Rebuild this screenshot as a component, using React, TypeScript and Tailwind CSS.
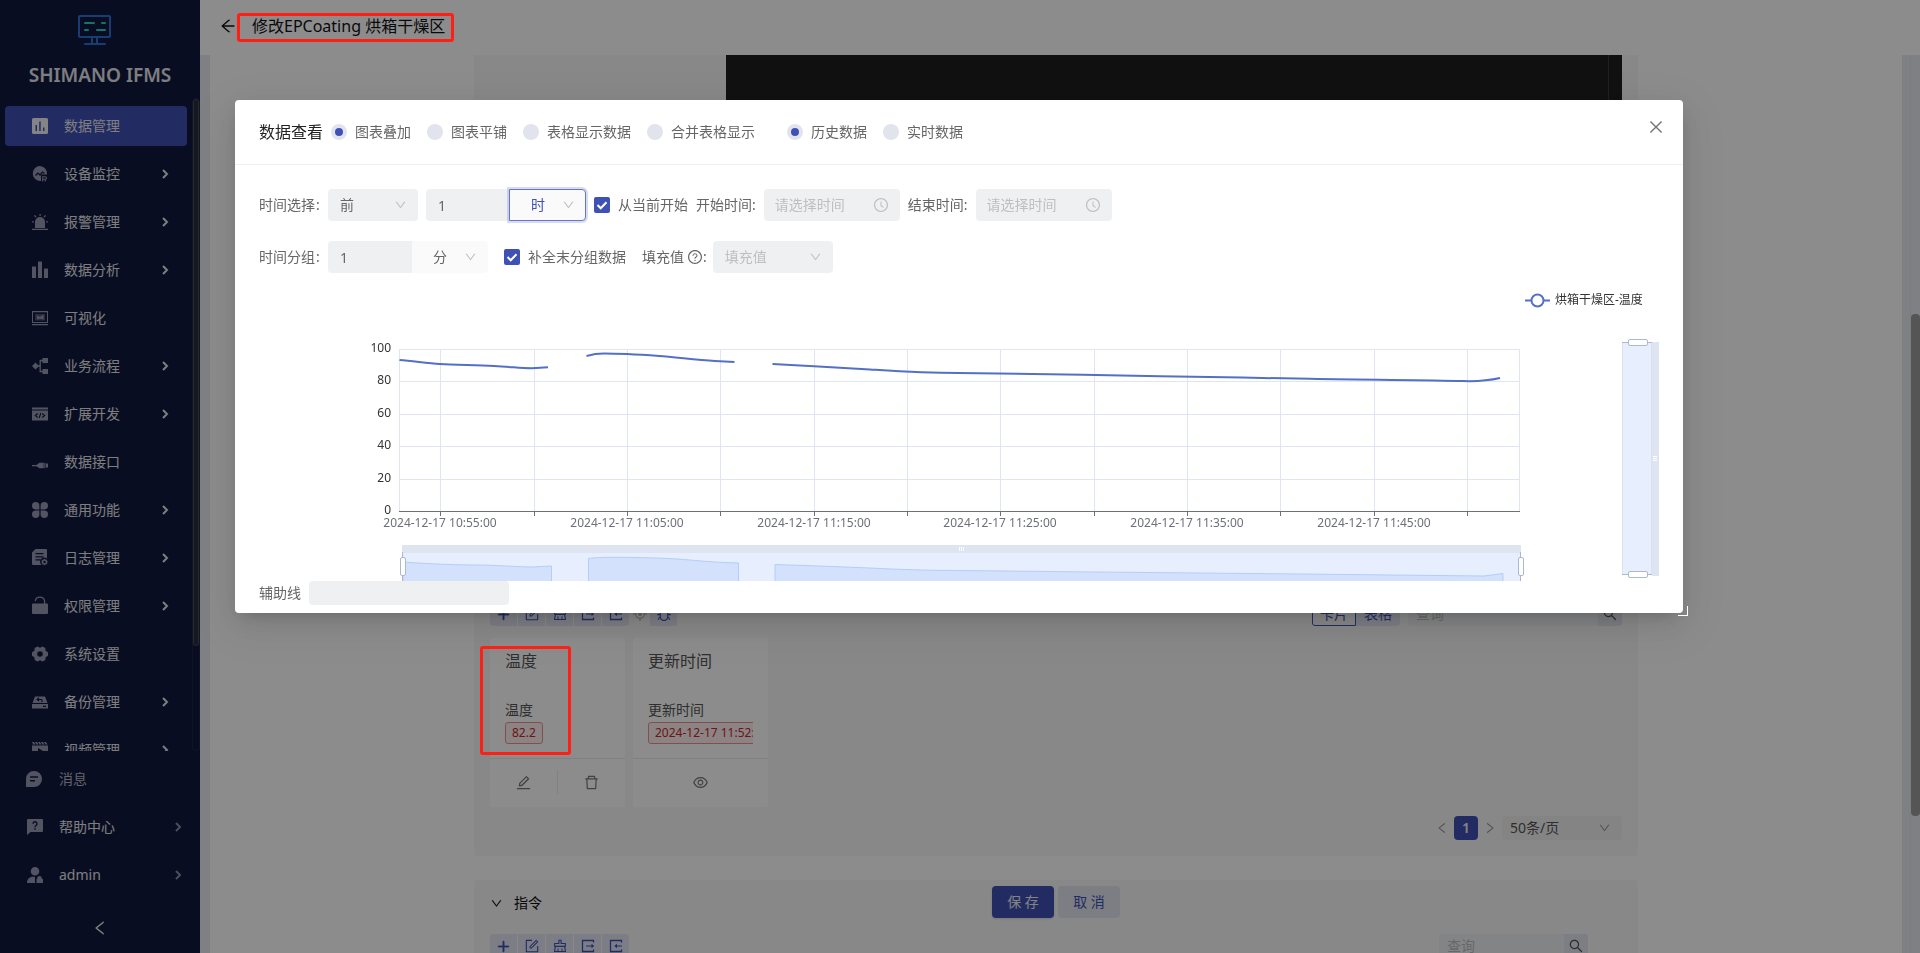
import { useState, type ReactNode } from 'react';
import {
  AiOutlineAim,
  AiOutlineArrowLeft,
  AiOutlineBug,
  AiOutlineClear,
  AiOutlineClockCircle,
  AiOutlineClose,
  AiOutlineDelete,
  AiOutlineDown,
  AiOutlineEdit,
  AiOutlineEye,
  AiOutlineForm,
  AiOutlineLeft,
  AiOutlinePlus,
  AiOutlineQuestionCircle,
  AiOutlineRight,
  AiOutlineSearch,
} from 'react-icons/ai';

type MenuItem = {
  key: string;
  label: string;
  icon: ReactNode;
  hasChildren?: boolean;
};

const menuItems: MenuItem[] = [
  {
    key: 'data',
    label: '数据管理',
    icon: (
      <path
        fillRule="evenodd"
        d="M1.5 0h13A1.5 1.5 0 0 1 16 1.5v13a1.5 1.5 0 0 1-1.5 1.5h-13A1.5 1.5 0 0 1 0 14.5v-13A1.5 1.5 0 0 1 1.5 0zM3.500 7v6h1.500V7zM7.200 3.500V13h1.500V3.500zM11 9.500V13h1.500V9.500z"
      />
    ),
  },
  {
    key: 'monitor',
    label: '设备监控',
    hasChildren: true,
    icon: (
      <>
        <path d="M7.500 0A7.500 7.500 0 0 1 15 8.500H9V15a7.500 7.500 0 1 1-1.500-15z" />
        <path
          d="M3.500 9.500 6 7l2 2 2.500-3 2 1.500"
          fill="none"
          stroke="#12193e"
          strokeWidth="1.200"
        />
        <path
          d="M10.700 15.500v-4.800h2.500a1.300 1.300 0 0 1 0 2.600h-2.500M13.200 13.500v2"
          fill="none"
          stroke="currentColor"
          strokeWidth="1.100"
        />
      </>
    ),
  },
  {
    key: 'alarm',
    label: '报警管理',
    hasChildren: true,
    icon: (
      <path d="M3 14V8a5 5 0 0 1 10 0v6zM0 14.700h16v1.200H0zM7.500 0h1.200v2H7.500zM2 1.800l1-.8 1.500 1.700-1 .8zM14 1.800l-1-.8-1.500 1.700 1 .8zM0 7.300h1.800v1.200H0zM14.200 7.300H16v1.200h-1.800z" />
    ),
  },
  {
    key: 'analysis',
    label: '数据分析',
    hasChildren: true,
    icon: (
      <path d="M.7 4.500h2.600a.7.700 0 0 1 .7.700V16H0V5.200a.7.700 0 0 1 .7-.7zM6.700-.5h2.600a.7.700 0 0 1 .7.700V16H6V.2a.7.700 0 0 1 .7-.7zM12.700 6.500h2.600a.7.700 0 0 1 .7.700V16h-4V7.200a.7.700 0 0 1 .7-.7z" />
    ),
  },
  {
    key: 'visual',
    label: '可视化',
    icon: (
      <>
        <path fillRule="evenodd" d="M0 1h16v12H0zM1 2.200v9.800h14V2.200zM0 14h16v1.200H0z" />
        <path d="M3 4h10v6.500H3z" opacity=".45" />
        <path d="M5 5.500 8 7l3.500-2.500v5L8 8.500 5 9.500z" />
      </>
    ),
  },
  {
    key: 'flow',
    label: '业务流程',
    hasChildren: true,
    icon: (
      <>
        <path d="M3.500 4.500 7 8l-3.500 3.500L0 8zM10.500 0H16v5h-5.500zM10.500 11H16v5h-5.500z" />
        <path
          d="M11 2.500H8.200v11H11M6 8h2"
          fill="none"
          stroke="currentColor"
          strokeWidth="1.300"
        />
      </>
    ),
  },
  {
    key: 'dev',
    label: '扩展开发',
    hasChildren: true,
    icon: (
      <>
        <path d="M0 1.500h16v2H0zM0 4.500h16v10H0z" />
        <path
          d="M5.800 7.500 3.300 9.500l2.500 2M10.200 7.500l2.500 2-2.500 2M8.800 7l-1.600 5"
          fill="none"
          stroke="#12193e"
          strokeWidth="1.100"
        />
      </>
    ),
  },
  {
    key: 'api',
    label: '数据接口',
    icon: (
      <path d="M0 11h4.500L7.500 8.700h4.200v5.600H7.500l-3-2.100H0zM12.300 8.700h1v5.600h-1zM13.800 9.500H16v4h-2.200z" />
    ),
  },
  {
    key: 'common',
    label: '通用功能',
    hasChildren: true,
    icon: (
      <path d="M3.700 0a3.700 3.700 0 0 1 3.700 3.700v3.700H3.700a3.700 3.700 0 0 1 0-7.400zM12.300 0a3.700 3.700 0 0 1 0 7.400H8.600V3.700A3.700 3.700 0 0 1 12.300 0zM3.700 8.600h3.700v3.700a3.700 3.700 0 1 1-3.700-3.700zM8.600 8.600h3.700a3.700 3.700 0 1 1-3.700 3.700z" />
    ),
  },
  {
    key: 'log',
    label: '日志管理',
    hasChildren: true,
    icon: (
      <>
        <path
          fillRule="evenodd"
          d="M3.500-1H14a1 1 0 0 1 1 1v8.500a4 4 0 0 0-5.500 6.500H1a1 1 0 0 1-1-1V2.500zM3.500 3v1.200h8V3zM3.500 6.200v1.200h8V6.200zM3.500 9.300v1.200h5V9.300z"
        />
        <circle cx="12.500" cy="12" r="2" fill="none" stroke="currentColor" strokeWidth="1.500" />
        <path
          d="M12.500 8.800v1M12.500 14.200v1M9.400 12h1M14.600 12h1M10.300 9.800l.7.700M14 13.500l.7.700M14.700 9.800l-.7.700M11 13.500l-.7.700"
          stroke="currentColor"
        />
      </>
    ),
  },
  {
    key: 'auth',
    label: '权限管理',
    hasChildren: true,
    icon: (
      <>
        <path d="M1 5.500h14a1 1 0 0 1 1 1V15a1 1 0 0 1-1 1H1a1 1 0 0 1-1-1V6.500a1 1 0 0 1 1-1z" />
        <path
          d="M3.200 3a4.800 4.800 0 0 1 9.400 0v3"
          fill="none"
          stroke="currentColor"
          strokeWidth="1.300"
        />
      </>
    ),
  },
  {
    key: 'system',
    label: '系统设置',
    icon: (
      <path
        fillRule="evenodd"
        d="M5.500.5 8 1.700 10.500.5 13.300 2l.3 2.800L16 6.300v3.400l-2.400 1.500-.3 2.800-2.800 1.500L8 14.300l-2.500 1.200L2.700 14l-.3-2.800L0 9.700V6.300l2.400-1.500L2.700 2zM8 5.200a2.800 2.800 0 1 0 0 5.600 2.800 2.800 0 0 0 0-5.600z"
      />
    ),
  },
  {
    key: 'backup',
    label: '备份管理',
    hasChildren: true,
    icon: (
      <>
        <path
          fillRule="evenodd"
          d="M3 2.500h10L15.500 9H.5zM0 10h16v4.500H0zM11 11.700v1.200h3v-1.200z"
        />
        <path
          d="M5 5.500h4.500a1.500 1.500 0 0 1 0 2.500M7 3.700 5 5.500l2 1.700"
          fill="none"
          stroke="#12193e"
          strokeWidth="1.100"
        />
      </>
    ),
  },
  {
    key: 'video',
    label: '视频管理',
    hasChildren: true,
    icon: (
      <path
        fillRule="evenodd"
        d="M0 0h2l1.500 2.500h-2zM3 0h2l1.500 2.500h-2zM6 0h2l1.500 2.500h-2zM9 0h2l1.500 2.500h-2zM12 0h2l1.500 2.500h-2zM0 1.500V2.500h.7zM0 3.500h16V15H0zM6 6v6l5-3z"
      />
    ),
  },
];

const bottomItems: MenuItem[] = [
  {
    key: 'message',
    label: '消息',
    icon: (
      <path
        fillRule="evenodd"
        d="M8 0a8 8 0 1 1 0 16H0V8a8 8 0 0 1 8-8zM4 5.300v1.500h8V5.300zM4 9v1.500h5V9z"
      />
    ),
  },
  {
    key: 'help',
    label: '帮助中心',
    hasChildren: true,
    icon: (
      <>
        <path d="M2 0h14a1 1 0 0 1 1 1v11a1 1 0 0 1-1 1H4.500L1 16V1a1 1 0 0 1 1-1z" />
        <path
          d="M7 4.800a2 2 0 1 1 3 1.700c-.7.400-1 .7-1 1.700M9 9.300v1.400"
          fill="none"
          stroke="#12193e"
          strokeWidth="1.400"
        />
      </>
    ),
  },
  {
    key: 'user',
    label: 'admin',
    hasChildren: true,
    icon: (
      <path d="M9 0a4.300 4.300 0 1 1 0 8.600A4.300 4.300 0 0 1 9 0zM1 16c0-4 2.500-6.300 6-6.300h2V16zM10.500 12h.7v-.7a2.300 2.300 0 0 1 4.600 0v.7H17v4h-6.500z" />
    ),
  },
];

const MenuIcon = ({ children }: { children: ReactNode }) => (
  <svg
    width="16"
    height="16"
    viewBox="0 0 16 16"
    fill="currentColor"
    className="shrink-0 overflow-visible"
  >
    {children}
  </svg>
);

const Arrow = () => (
  <svg width="7" height="10" viewBox="0 0 7 10" fill="none" stroke="currentColor" strokeWidth="2">
    <path d="M1 1l4 4-4 4" />
  </svg>
);

const Logo = () => (
  <svg width="33" height="30" viewBox="0 0 33 30" fill="none">
    <rect x="1" y="1" width="31" height="21" rx="1" stroke="#2f6fd0" strokeWidth="2" />
    <path d="M14 22v6M19 22v6M7 29h20" stroke="#2f6fd0" strokeWidth="2" strokeLinecap="round" />
    <path
      d="M7 8h9M24 8h3M7 15h3M19 15h8"
      stroke="#22d3cc"
      strokeWidth="2"
      strokeLinecap="round"
    />
  </svg>
);

const SideBar = () => {
  const [activeKey, setActiveKey] = useState('data');

  return (
    <aside className="flex h-full w-[200px] shrink-0 flex-col bg-[#12193e] text-[#e4e5ea]">
      {/* Logo */}
      <div className="flex h-[98px] shrink-0 flex-col items-center pt-[15px]">
        <div className="pr-[11px]">
          <Logo />
        </div>
        <p className="mt-3 text-[19px] leading-9 font-semibold whitespace-nowrap">SHIMANO IFMS</p>
      </div>

      {/* Menu Items */}
      <div className="flex h-[653px] shrink-0">
        <nav className="flex-1 overflow-hidden px-[5px] pt-2">
          <ul className="space-y-2">
            {menuItems.map((item) => (
              <li key={item.key}>
                <a
                  href={`#${item.key}`}
                  onClick={() => setActiveKey(item.key)}
                  className={`flex h-10 items-center rounded pr-[18px] pl-[27px] ${
                    activeKey === item.key ? 'bg-[#3f51b5]' : ''
                  }`}
                >
                  <span className={activeKey === item.key ? 'text-[#f0f0f4]' : 'text-[#9799b3]'}>
                    <MenuIcon>{item.icon}</MenuIcon>
                  </span>
                  <span className="ml-4 flex-1">{item.label}</span>
                  {item.hasChildren && <Arrow />}
                </a>
              </li>
            ))}
          </ul>
        </nav>
        <div className="w-2 rounded border border-[#20253f]">
          <div className="h-[547px] rounded border border-[#454a58] bg-[#282c3c]" />
        </div>
      </div>

      {/* User area */}
      <ul className="space-y-2 pt-2 pr-[18px] pl-[26px]">
        {bottomItems.map((item) => (
          <li key={item.key}>
            <a href={`#${item.key}`} className="flex h-10 items-center">
              <span className="text-[#9799b3]">
                <MenuIcon>{item.icon}</MenuIcon>
              </span>
              <span
                className={`ml-[17px] flex-1 ${item.key === 'message' ? 'text-[#b4b5c0]' : ''}`}
              >
                {item.label}
              </span>
              {item.hasChildren && (
                <span className="text-[#8c8ea5]">
                  <Arrow />
                </span>
              )}
            </a>
          </li>
        ))}
      </ul>
      <button className="mt-6 flex justify-center" aria-label="收起菜单">
        <AiOutlineLeft size={18} />
      </button>
    </aside>
  );
};

const ExportIcon = () => (
  <svg width="14" height="14" viewBox="0 0 14 14" fill="none" stroke="currentColor">
    <path d="M12.500 3.500V1.500h-11v11h11v-2" strokeWidth="1.300" />
    <path d="M5 7h7" />
    <path d="M10.500 4.800 13.200 7l-2.700 2.200z" fill="currentColor" stroke="none" />
  </svg>
);

const ImportIcon = () => (
  <svg width="14" height="14" viewBox="0 0 14 14" fill="none" stroke="currentColor">
    <path d="M12.500 3.500V1.500h-11v11h11v-2" strokeWidth="1.300" />
    <path d="M6 7h7" />
    <path d="M8 4.800 5.300 7 8 9.200z" fill="currentColor" stroke="none" />
  </svg>
);

const ToolButton = ({ label, children }: { label: string; children: ReactNode }) => (
  <button
    aria-label={label}
    className="flex h-6 w-[27px] items-center justify-center bg-[#e3e6f3] text-[#3f51b5]"
  >
    {children}
  </button>
);

const ToolGroup = () => (
  <div className="flex gap-px overflow-hidden rounded-[3px]">
    <ToolButton label="新增">
      <AiOutlinePlus size={15} strokeWidth={50} />
    </ToolButton>
    <ToolButton label="编辑">
      <AiOutlineForm size={16} />
    </ToolButton>
    <ToolButton label="清空">
      <AiOutlineClear size={16} />
    </ToolButton>
    <ToolButton label="导出">
      <ExportIcon />
    </ToolButton>
    <ToolButton label="导入">
      <ImportIcon />
    </ToolButton>
  </div>
);

const SearchBox = ({ className }: { className: string }) => (
  <div className={`flex h-6 overflow-hidden rounded-[3px] bg-[#eff0f2] ${className}`}>
    <input
      aria-label="查询"
      placeholder="查询"
      className="min-w-0 flex-1 bg-transparent px-2 outline-none placeholder:text-[#bdbdbd]"
    />
    <button
      aria-label="搜索"
      className="flex w-6 items-center justify-center bg-[#e3e5ee] text-[#555]"
    >
      <AiOutlineSearch size={16} />
    </button>
  </div>
);

type PointCardProps = {
  name: string;
  value: string;
  children: ReactNode;
};

const PointCard = ({ name, value, children }: PointCardProps) => (
  <div className="h-[169px] w-[135px] rounded-[3px] bg-white text-[#555]">
    <div className="h-[121px] overflow-hidden border-b border-[#ececec] px-[15px] pt-[11px]">
      <h3 className="text-base leading-6">{name}</h3>
      <p className="mt-[26px] leading-[22px]">{name}</p>
      <div className="overflow-hidden">
        <span className="mt-px inline-block h-[22px] rounded-[3px] border border-[#ef8f8f] bg-[#ffeef0] px-[6px] text-xs leading-5 whitespace-nowrap text-[#c62828]">
          {value}
        </span>
      </div>
    </div>
    <div className="flex h-[46px] items-center text-[#777]">{children}</div>
  </div>
);

const Page = () => (
  <div className="flex h-full min-w-0 flex-1 flex-col">
    <header className="flex h-[55px] shrink-0 items-center bg-white pb-[3px] pl-[19px] text-[#111]">
      <button aria-label="返回">
        <AiOutlineArrowLeft size={18} />
      </button>
      <h1 className="ml-[15px] text-base">修改EPCoating 烘箱干燥区</h1>
    </header>

    <div className="flex min-h-0 flex-1 bg-[#e8eaee] pl-[10px]">
      <main className="relative h-full min-w-0 flex-1 overflow-hidden bg-white px-[264px]">
        <section className="flex justify-end rounded-b bg-[#f8f8f8] pr-4 pb-4">
          <div className="flex h-[491px] w-[896px] justify-end bg-[#1e1e1e] pr-[13px]">
            <div className="w-px bg-[#3a3a3a]" />
          </div>
        </section>

        <section className="mt-6 rounded bg-[#f8f8f8] p-4">
          <div className="flex justify-between">
            <div className="flex">
              <ToolGroup />
              <button
                disabled
                aria-label="定位"
                className="flex w-[21px] items-center justify-center text-[#b8b8b8]"
              >
                <AiOutlineAim size={16} />
              </button>
              <ToolButton label="调试">
                <AiOutlineBug size={16} />
              </ToolButton>
            </div>
            <div className="flex">
              <div className="flex text-[#3f51b5]">
                <button className="h-6 w-11 rounded-l-[3px] border border-[#3f51b5] leading-[22px]">
                  卡片
                </button>
                <button className="h-6 w-11 rounded-r-[3px] bg-[#e3e6f3]">表格</button>
              </div>
              <SearchBox className="ml-2 w-[214px]" />
            </div>
          </div>

          <div className="mt-3 flex gap-2">
            <PointCard name="温度" value="82.2">
              <button className="flex flex-1 justify-center" aria-label="编辑">
                <AiOutlineEdit size={17} />
              </button>
              <div className="h-6 w-px bg-[#ececec]" />
              <button className="flex flex-1 justify-center" aria-label="删除">
                <AiOutlineDelete size={17} />
              </button>
            </PointCard>
            <PointCard name="更新时间" value="2024-12-17 11:52:00">
              <button className="flex flex-1 justify-center" aria-label="查看">
                <AiOutlineEye size={17} />
              </button>
            </PointCard>
          </div>

          <div className="mt-2 flex h-[25px] items-center justify-end text-[#999]">
            <button aria-label="上一页">
              <AiOutlineLeft size={14} />
            </button>
            <button className="mx-[5px] h-6 w-6 rounded bg-[#3f51b5] font-semibold text-[#f0f0f0]">
              1
            </button>
            <button aria-label="下一页">
              <AiOutlineRight size={14} />
            </button>
            <div className="relative ml-[5px] w-[120px]">
              <select
                aria-label="每页条数"
                className="h-6 w-full appearance-none rounded bg-[#f0f1f2] px-2 text-[#555]"
              >
                <option>50条/页</option>
              </select>
              <AiOutlineDown
                size={13}
                className="pointer-events-none absolute top-1/2 right-[11px] -translate-y-1/2"
              />
            </div>
          </div>
        </section>

        <section className="mt-6 rounded bg-[#f8f8f8] px-4 pt-3 pb-4">
          <h2 className="flex items-center leading-[22px] text-[#111]">
            <AiOutlineDown size={13} className="mr-[11px]" />
            指令
          </h2>
          <div className="mt-5 flex justify-between pr-[34px]">
            <ToolGroup />
            <SearchBox className="w-[149px]" />
          </div>
        </section>

        {/* Save bar */}
        <div className="absolute inset-x-0 bottom-[35px] flex justify-center gap-1">
          <button className="h-8 w-[62px] rounded bg-[#3f51b5] text-[#f0f0f0] shadow">保 存</button>
          <button className="h-8 w-[62px] rounded bg-[#e3e6ee] text-[#3f51b5]">取 消</button>
        </div>
      </main>
      <div className="w-2 shrink-0" />
      <div className="w-[10px] shrink-0 border-l border-[#e0e2e6] pt-[259px]">
        <div className="h-[502px] rounded bg-[#9b9b9b]" />
      </div>
    </div>
  </div>
);

type ChoiceProps = {
  name: string;
  label: string;
  defaultChecked?: boolean;
};

const Radio = ({ name, label, defaultChecked }: ChoiceProps) => (
  <label className="flex items-center gap-2">
    <input
      type="radio"
      name={name}
      defaultChecked={defaultChecked}
      className="h-4 w-4 appearance-none rounded-full bg-[#e1e4ec] checked:border-4 checked:border-[#e1e4ec] checked:bg-[#3f51b5]"
    />
    {label}
  </label>
);

const Checkbox = ({ name, label, defaultChecked }: ChoiceProps) => (
  <label className="relative flex items-center gap-2">
    <input
      type="checkbox"
      name={name}
      defaultChecked={defaultChecked}
      className="peer h-4 w-4 appearance-none rounded-xs bg-[#e1e4ec] checked:bg-[#3f51b5]"
    />
    <svg
      className="pointer-events-none invisible absolute left-0 peer-checked:visible"
      width="16"
      height="16"
      viewBox="0 0 16 16"
      fill="none"
      stroke="#fff"
      strokeWidth="2"
    >
      <path d="m3.500 8 3.200 3.200 5.800-6" />
    </svg>
    {label}
  </label>
);

type SelectProps = {
  label: string;
  value: string;
  className: string;
};

const Select = ({ label, value, className }: SelectProps) => (
  <div className="relative">
    <select aria-label={label} className={`h-8 appearance-none outline-none ${className}`}>
      <option>{value}</option>
    </select>
    <AiOutlineDown
      size={13}
      className="pointer-events-none absolute top-1/2 right-[11px] -translate-y-1/2 text-[#bfbfbf]"
    />
  </div>
);

const TimeInput = ({ label }: { label: string }) => (
  <label className="flex items-center gap-2">
    {label}
    <span className="flex h-8 w-[136px] items-center rounded bg-[#eff0f2] px-[11px]">
      <input
        disabled
        placeholder="请选择时间"
        className="min-w-0 flex-1 bg-transparent placeholder:text-[#bfbfbf]"
      />
      <AiOutlineClockCircle size={16} className="text-[#bfbfbf]" />
    </span>
  </label>
);

const FieldLabel = ({ children }: { children: ReactNode }) => (
  <span className="mr-2 flex w-[61px] gap-px">
    {children}
    <span>:</span>
  </span>
);

const yTicks = [100, 80, 60, 40, 20, 0];
const xTicks = [181, 275, 368, 461, 555, 648, 741, 835, 928, 1021, 1115, 1208];
const xLabels = ['10:55:00', '11:05:00', '11:15:00', '11:25:00', '11:35:00', '11:45:00'];

const series = [
  'M140.500 75C154 76 167 78 181 79S215 80 235 81S260 83.300 273 83.300 L289 82.200',
  'M327.500 71C333 69.500 337 68.600 345 68.600S385 70 400 71S435 74.500 456 76 L475.500 77',
  'M513.500 79 555 81.300 611 84.500C640 86.300 665 88 699 88S835 90 901 91.300 991 92.500 1051 93.800 1160 94.800 1204 96C1220 96.600 1230 95.500 1241 93',
];

const miniSeries = [
  'M144 277 C170 279 200 280 218 280 S260 282 273 282 L292.500 281 V298 H144z',
  'M329.500 273.500 C340 272 360 272 396 273 S440 277 479.500 278 V298 H329.500z',
  'M516 279.500 L560 281 611 283 C650 285 680 285.500 699 285.500 L835 287 1041 289 1225 291 1244 288.500 V298 H516z',
];

const TemperatureChart = () => (
  <svg viewBox="0 0 1400 296" className="block h-auto w-full" fontSize="12" role="img">
    <title>烘箱干燥区-温度</title>

    {/* Legend */}
    <path d="M1266 15.500h25" stroke="#5470c6" strokeWidth="2" />
    <circle cx="1278.500" cy="15.500" r="6" fill="#fff" stroke="#5470c6" strokeWidth="2" />
    <text x="1296" y="19" fill="#333">
      烘箱干燥区-温度
    </text>

    {/* Grid */}
    {yTicks.map((tick, i) => (
      <g key={tick}>
        {tick > 0 && (
          <path d={`M140 ${64.5 + Math.round(i * 32.4)}h1120`} stroke="#e0e6f1" />
        )}
        <text x="132" y={67 + Math.round(i * 32.4)} textAnchor="end" fill="#333">
          {tick}
        </text>
      </g>
    ))}
    {[140, ...xTicks, 1260].map((x) => (
      <path key={x} d={`M${x + 0.5} 64v162`} stroke="#e0e6f1" />
    ))}
    <path d="M140 226.500h1121" stroke="#6e7079" />
    {xTicks.map((x) => (
      <path key={x} d={`M${x + 0.5} 226v5`} stroke="#6e7079" />
    ))}
    {xLabels.map((time, i) => (
      <text key={time} x={xTicks[i * 2]} y="242" textAnchor="middle" fill="#6e7079">
        2024-12-17 {time}
      </text>
    ))}
    {series.map((d) => (
      <path key={d} d={d} fill="none" stroke="#5470c6" strokeWidth="2" />
    ))}

    {/* Horizontal zoom */}
    <path d="M143 268h1119v30H143z" fill="#e7eefd" />
    <path d="M143 260h1119v8H143z" fill="#dfe4f1" />
    {miniSeries.map((d) => (
      <path key={d} d={d} fill="#d3e1fd" stroke="#b5cdf9" />
    ))}
    <path d="M700.500 262v4M702.500 262v4M704.500 262v4" stroke="#fff" />
    <path d="M143.500 267v29M1261.500 267v29" stroke="#acb8d1" />
    <rect x="141.500" y="272.500" width="5" height="18" rx="1.500" fill="#fff" stroke="#acb8d1" />
    <rect x="1259.500" y="272.500" width="5" height="18" rx="1.500" fill="#fff" stroke="#acb8d1" />

    {/* Vertical zoom */}
    <path d="M1363 57h30v233h-30z" fill="#e7eefd" />
    <path d="M1363.500 57v233M1392.500 57v233" stroke="#dbe1f0" />
    <path d="M1393 57h7v234h-7z" fill="#dfe4f1" />
    <path d="M1394 171.500h4M1394 173.500h4M1394 175.500h4" stroke="#fff" />
    <path d="M1363 57.500h30M1363 289.500h30" stroke="#acb8d1" />
    <rect x="1369.500" y="54.500" width="19" height="6" rx="1.500" fill="#fff" stroke="#acb8d1" />
    <rect x="1369.500" y="286.500" width="19" height="6" rx="1.500" fill="#fff" stroke="#acb8d1" />
  </svg>
);

const DataModal = () => (
  <div className="fixed inset-0 z-20 flex items-start bg-black/45 pt-[100px] pr-[237px] pl-[235px]">
    <div
      role="dialog"
      aria-label="数据查看"
      className="relative min-w-0 flex-1 rounded bg-white text-[#666] shadow-[0_6px_16px_-8px_rgba(0,0,0,0.2),0_9px_28px_rgba(0,0,0,0.1),0_12px_48px_16px_rgba(0,0,0,0.05)]"
    >
      <header className="flex h-[65px] items-center border-b border-[#f0f0f0] px-6">
        <h2 className="mr-2 text-base text-[#222]">数据查看</h2>
        <div className="flex gap-4">
          <Radio name="view" label="图表叠加" defaultChecked />
          <Radio name="view" label="图表平铺" />
          <Radio name="view" label="表格显示数据" />
          <Radio name="view" label="合并表格显示" />
        </div>
        <div className="ml-8 flex gap-4">
          <Radio name="source" label="历史数据" defaultChecked />
          <Radio name="source" label="实时数据" />
        </div>
        <button aria-label="关闭" className="-mr-1.5 mb-2.5 ml-auto text-[#777]">
          <AiOutlineClose size={18} />
        </button>
      </header>

      <div className="px-6 pt-6">
        <div className="flex items-center whitespace-nowrap">
          <FieldLabel>时间选择</FieldLabel>
          <Select label="方向" value="前" className="w-[90px] rounded bg-[#eff0f2] px-3" />
          <div className="mr-2 ml-2 flex">
            <input
              aria-label="时间长度"
              defaultValue="1"
              className="h-8 w-[83px] rounded-l bg-[#eff0f2] px-3"
            />
            <Select
              label="时间单位"
              value="时"
              className="w-[77px] rounded-r border border-[#6575c8] bg-[#fafafa] px-[21px] text-[#3f51b5] ring-2 ring-[#3f51b5]/20"
            />
          </div>
          <div className="flex gap-2">
            <Checkbox name="fromNow" label="从当前开始" defaultChecked />
            <TimeInput label="开始时间:" />
            <TimeInput label="结束时间:" />
          </div>
        </div>

        <div className="mt-5 flex items-center whitespace-nowrap">
          <FieldLabel>时间分组</FieldLabel>
          <input
            aria-label="分组长度"
            defaultValue="1"
            className="h-8 w-[84px] rounded-l bg-[#eff0f2] px-3"
          />
          <Select
            label="分组单位"
            value="分"
            className="w-[76px] rounded-r bg-[#fafafa] px-[21px]"
          />
          <div className="mx-4">
            <Checkbox name="fillLast" label="补全末分组数据" defaultChecked />
          </div>
          <span className="mr-[6px] flex items-center">
            填充值
            <AiOutlineQuestionCircle size={16} className="ml-[3px]" />:
          </span>
          <Select
            label="填充值"
            value="填充值"
            className="w-[120px] rounded bg-[#eff0f2] px-3 text-[#bfbfbf]"
          />
        </div>

        <div className="mt-3">
          <TemperatureChart />
        </div>

        <label className="flex items-center gap-2 pb-2">
          辅助线
          <input className="h-6 w-[200px] rounded bg-[#eff0f2] px-2" />
        </label>
      </div>

      {/* Resize handle */}
      <div className="absolute -right-[5px] -bottom-[3px] h-[10px] w-[10px] border-r border-b border-white" />
    </div>
  </div>
);

const App = () => (
  <div className="relative flex h-screen overflow-hidden bg-white font-['Noto_Sans','Noto_Sans_CJK_SC',sans-serif] text-sm">
    <SideBar />
    <Page />
    <DataModal />

    {/* Highlight marks */}
    <div className="pointer-events-none absolute top-[13px] left-[237px] z-30 h-[29px] w-[217px] rounded-[3px] border-3 border-[#ff2015]" />
    <div className="pointer-events-none absolute top-[646px] left-[480px] z-30 h-[109px] w-[91px] rounded-[3px] border-3 border-[#ff2015]" />
  </div>
);

export default App;
